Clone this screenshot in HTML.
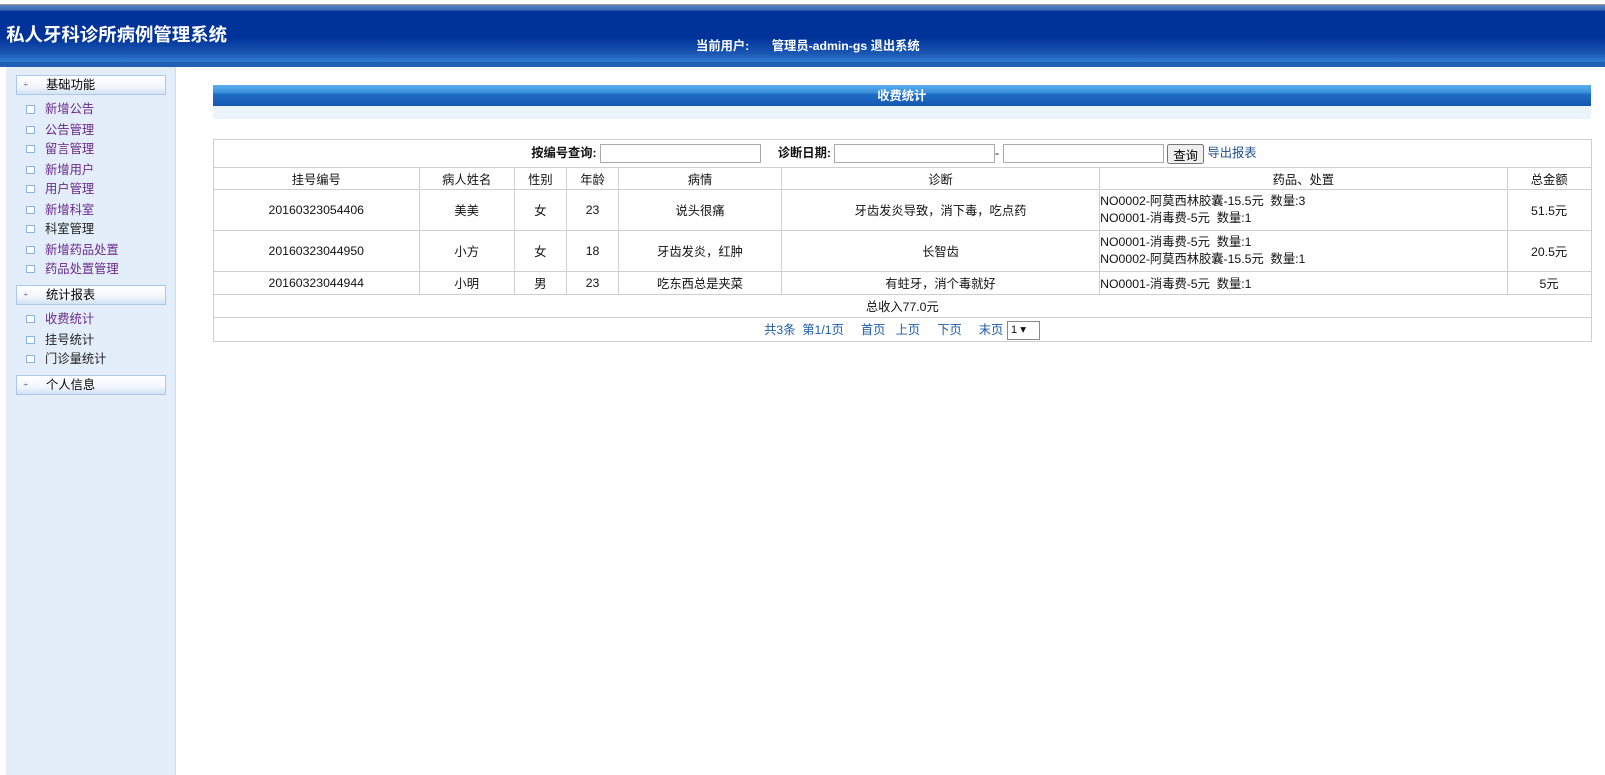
<!DOCTYPE html><html><head><meta charset="utf-8"><style>
body{margin:0;width:1605px;height:775px;background:#fff;font-family:"Liberation Sans","Noto Sans CJK SC",sans-serif;font-size:12px;overflow:hidden}
#w{position:relative;zoom:1.0236;width:1568px;height:757px}
.hdr{position:absolute;left:0;top:4px;width:1568px;height:60px;border-top:1px solid #999;background:linear-gradient(#5a84c4 0,#3a68b4 5px,#003399 6px,#003399 32px,#1c59b4 48px,#2f7bd0 55px,#1f5fb5 56px,#1f5fb5 60px)}
.title{position:absolute;left:6px;top:16px;color:#fff;font-size:18px;font-weight:bold}
.user{position:absolute;top:30px;color:#fff;font-weight:bold;font-size:12px}
.side{position:absolute;left:6px;top:65px;width:165px;height:692px;background:#e3eefa;border-right:1px solid #c9dcf2}
.mh{position:absolute;left:10px;width:144px;height:18px;border:1px solid #a9c8ec;background:linear-gradient(#fff,#f2f6fc 60%,#d3e2f5);line-height:18px;color:#000}
.mh span{position:absolute;left:28px}
.mh i{position:absolute;left:6px;top:0;font-style:normal;font-size:8px;color:#558}
.it{position:absolute;left:38px;color:#6a2a8a;line-height:16px}
.it.k{color:#222}
.it:before{content:"";position:absolute;left:-19px;top:4px;width:7px;height:6px;border:1px solid #8ab4e6;background:#fff}
.bar{position:absolute;left:208px;top:83px;width:1346px;height:21px;background:linear-gradient(#5cb0ee,#3a8fdc 35%,#1e6cc4 45%,#1458b4);color:#fff;font-weight:bold;text-align:center;line-height:22px}
.strip{position:absolute;left:208px;top:104px;width:1346px;height:12px;background:#ebf3fb}
table{position:absolute;left:208px;top:136px;width:1347px;border-collapse:collapse}
td{border:1px solid #cfcfcf;text-align:center;padding:0;color:#111}
input{height:17px;border:1px solid #aaa;padding:0;vertical-align:middle;width:155px}
.lk{color:#1d5ba8}
</style></head><body><div id="w">
<div class="hdr"><div class="title">私人牙科诊所病例管理系统</div>
<div class="user" style="left:680px">当前用户:</div><div class="user" style="left:754px">管理员-admin-gs 退出系统</div></div>
<div class="side">
<div class="mh" style="top:8px"><i>÷</i><span>基础功能</span></div>
<div class="it" style="top:34px">新增公告</div>
<div class="it" style="top:54px">公告管理</div>
<div class="it" style="top:73px">留言管理</div>
<div class="it" style="top:93px">新增用户</div>
<div class="it" style="top:112px">用户管理</div>
<div class="it" style="top:132px">新增科室</div>
<div class="it k" style="top:151px">科室管理</div>
<div class="it" style="top:171px">新增药品处置</div>
<div class="it" style="top:190px">药品处置管理</div>
<div class="mh" style="top:213px"><i>÷</i><span>统计报表</span></div>
<div class="it" style="top:239px">收费统计</div>
<div class="it k" style="top:259px">挂号统计</div>
<div class="it k" style="top:278px">门诊量统计</div>
<div class="mh" style="top:301px"><i>÷</i><span>个人信息</span></div>
</div>
<div class="bar">收费统计</div><div class="strip"></div>
<table>
<tr style="height:27px"><td colspan="8" style="text-align:left;padding-left:310px"><b>按编号查询:</b> <input> &nbsp; &nbsp; <b>诊断日期:</b> <input>-<input style="margin-left:4px"> <button style="height:20px;font-size:12px;padding:0 4px;vertical-align:middle">查询</button> <span style="color:#1d4f8f">导出报表</span></td></tr>
<tr style="height:22px"><td style="width:200px">挂号编号</td><td style="width:92px">病人姓名</td><td style="width:50px">性别</td><td style="width:50px">年龄</td><td style="width:158px">病情</td><td style="width:310px">诊断</td><td style="width:397px">药品、处置</td><td>总金额</td></tr>
<tr style="height:40px"><td>20160323054406</td><td>美美</td><td>女</td><td>23</td><td>说头很痛</td><td>牙齿发炎导致，消下毒，吃点药</td><td style="text-align:left;line-height:17px">NO0002-阿莫西林胶囊-15.5元&nbsp; 数量:3<br>NO0001-消毒费-5元&nbsp; 数量:1</td><td>51.5元</td></tr>
<tr style="height:40px"><td>20160323044950</td><td>小方</td><td>女</td><td>18</td><td>牙齿发炎，红肿</td><td>长智齿</td><td style="text-align:left;line-height:17px">NO0001-消毒费-5元&nbsp; 数量:1<br>NO0002-阿莫西林胶囊-15.5元&nbsp; 数量:1</td><td>20.5元</td></tr>
<tr style="height:22px"><td>20160323044944</td><td>小明</td><td>男</td><td>23</td><td>吃东西总是夹菜</td><td>有蛀牙，消个毒就好</td><td style="text-align:left">NO0001-消毒费-5元&nbsp; 数量:1</td><td>5元</td></tr>
<tr style="height:23px"><td colspan="8">总收入77.0元</td></tr>
<tr style="height:23px"><td colspan="8"><span class="lk">共3条&nbsp; 第1/1页 &nbsp; &nbsp; 首页 &nbsp; 上页 &nbsp; &nbsp; 下页 &nbsp; &nbsp; 末页</span> <span style="display:inline-block;border:1px solid #888;width:28px;height:16px;line-height:16px;text-align:left;padding-left:3px;vertical-align:middle;font-size:11px">1 ▾</span></td></tr>
</table>
</div></body></html>
